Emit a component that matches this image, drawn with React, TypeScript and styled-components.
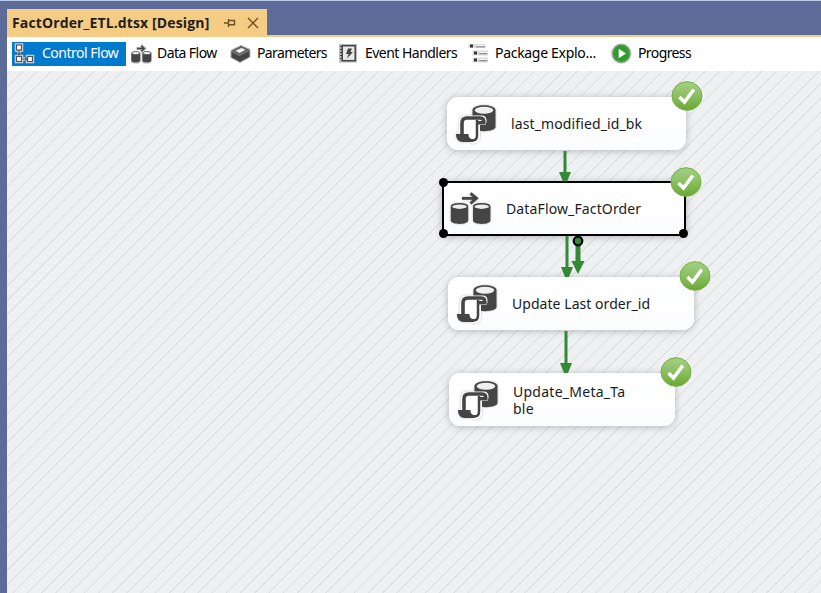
import React from "react";
import styled, { createGlobalStyle } from "styled-components";

const GlobalStyle = createGlobalStyle`
  html, body { margin: 0; padding: 0; overflow: hidden; }
`;

const Window = styled.div`
  box-sizing: border-box;
  width: 821px;
  height: 593px;
  padding: 0 0 0 7px;
  border-top: 1px solid #bccbe8;
  background: #5d6b99;
  display: flex;
  flex-direction: column;
  overflow: hidden;
  font-family: "Noto Sans", sans-serif;
`;

const TabStrip = styled.div`
  height: 34px;
  flex: none;
  padding-top: 8px;
  box-sizing: border-box;
  display: flex;
`;

const DocumentTab = styled.div`
  width: 260px;
  height: 27px;
  box-sizing: border-box;
  padding-left: 5px;
  background: #f5cc84;
  color: #1e1e1e;
  display: flex;
  align-items: center;
`;

const TabTitle = styled.span`
  width: 212px;
  font: 700 14px/26px "Open Sans", sans-serif;
  letter-spacing: 0.13px;
  white-space: nowrap;
`;

const TabGlyph = styled.svg<{ $gap: number }>`
  flex: none;
  width: 12px;
  height: 12px;
  margin-right: ${(p) => p.$gap}px;
  fill: none;
  stroke: #75501f;
  stroke-width: 1.4;
`;

const Toolbar = styled.div`
  height: 36px;
  flex: none;
  box-sizing: border-box;
  border-top: 2px solid #f5cc84;
  background: #fff;
  display: flex;
  align-items: center;
  padding: 0 0 1px 5px;
`;

const ToolItem = styled.div<{ $width: number; $lead: number; $active?: boolean }>`
  width: ${(p) => p.$width}px;
  height: 24px;
  flex: none;
  box-sizing: border-box;
  padding-left: ${(p) => p.$lead}px;
  display: flex;
  align-items: center;
  background: ${(p) => (p.$active ? "#007acc" : "transparent")};
  color: ${(p) => (p.$active ? "#fff" : "#000")};
`;

const ToolLabel = styled.span<{ $gap: number; $track: number }>`
  margin-left: ${(p) => p.$gap}px;
  padding-bottom: 2px;
  font-size: 14px;
  line-height: 22px;
  letter-spacing: ${(p) => p.$track}px;
  white-space: nowrap;
`;

const ToolIcon = styled.svg`
  width: 21px;
  height: 21px;
  flex: none;
`;

const Canvas = styled.div`
  position: relative;
  flex: 1;
  background: repeating-linear-gradient(
    135deg,
    #eff0f2 0,
    #eff0f2 0.7px,
    #dedfe1 1.2px,
    #dedfe1 1.8px,
    #eff0f2 2.3px,
    #eff0f2 10.05px
  );
`;

const Connectors = styled.svg`
  position: absolute;
  inset: 0;
  width: 100%;
  height: 100%;
`;

const Task = styled.div<{ $x: number; $y: number; $w: number; $selected?: boolean }>`
  position: absolute;
  left: ${(p) => p.$x}px;
  top: ${(p) => p.$y}px;
  width: ${(p) => p.$w}px;
  height: ${(p) => (p.$selected ? 55 : 53)}px;
  box-sizing: border-box;
  padding-left: ${(p) => (p.$selected ? 6 : 8)}px;
  display: flex;
  align-items: center;
  border: ${(p) => (p.$selected ? "2px solid #000" : "0")};
  border-radius: ${(p) => (p.$selected ? 2 : 11)}px;
  background: linear-gradient(#fff, #fbfcfe);
  box-shadow: 0 1px 7px rgba(60, 60, 70, 0.32);
`;

const TaskIcon = styled.svg`
  width: 42px;
  height: 40px;
  flex: none;
  filter: drop-shadow(0 0 1px rgba(60, 60, 60, 0.35));
`;

const TaskLabel = styled.span<{ $track: number }>`
  margin-left: 14px;
  color: #1b1b1b;
  font-size: 14px;
  line-height: 17px;
  letter-spacing: ${(p) => p.$track}px;
  white-space: pre;
`;

const StatusBadge = styled.svg<{ $inset: number }>`
  position: absolute;
  width: 32px;
  height: 32px;
  right: ${(p) => -17 - p.$inset}px;
  top: ${(p) => -17 - p.$inset / 2}px;
`;

const Handle = styled.i<{ $right?: boolean; $bottom?: boolean }>`
  position: absolute;
  width: 9px;
  height: 9px;
  border-radius: 50%;
  background: #000;
  ${(p) => (p.$right ? "right: -4px;" : "left: -5px;")}
  ${(p) => (p.$bottom ? "bottom: -4px;" : "top: -5px;")}
`;

const SqlTaskArt = () => (
  <TaskIcon viewBox="0 0 42 40">
    <path d="M17.500 6v17c0 5.500 23 5.500 23 0V6c0-6.500-23-6.500-23 0z" fill="#454545" />
    <ellipse cx="29" cy="6.300" rx="9.300" ry="3.500" fill="#efefef" />
    <path
      d="M10 11.500h17c5 0 5.500 6 3.500 9.500h-5.500v11c0 6-3 7.500-8 7.500L3 33l1-14c0-5 1.500-7.500 6-7.500z"
      fill="#fcfcfd"
    />
    <path d="M9 19c0-2 1-3 3-3h9v15c0 6-5 6-6 0H9z" fill="#fff" />
    <path
      d="M7 31V19c0-3.500 1.500-5 5-5h13c3 0 4 1.500 3.800 4.800h-6"
      fill="none"
      stroke="#454545"
      strokeWidth="3.600"
    />
    <path d="M22 16v15.500c0 3.500-1.500 5-4.500 5" fill="none" stroke="#454545" strokeWidth="2.500" />
    <path d="M1 30h12.500c0 3.500 1.200 5 4.500 5v3H8c-4.500 0-7-3-7-8z" fill="#454545" />
  </TaskIcon>
);

const FlowDrums = () => (
  <>
    <path d="M.8 18v13.500c0 4.500 17.400 4.500 17.400 0V18zM23 18v13.500c0 4.500 17.400 4.500 17.400 0V18z" fill="#454545" />
    <g fill="#ededed" stroke="#454545" strokeWidth="1.500">
      <ellipse cx="9.500" cy="17.700" rx="8" ry="3" />
      <ellipse cx="31.700" cy="17.700" rx="8" ry="3" />
    </g>
    <path d="M12 9.300h14M20.500 4.300l6 5-6 5" fill="none" stroke="#454545" strokeWidth="2.800" />
  </>
);

const DataFlowArt = () => (
  <TaskIcon viewBox="0 0 42 40">
    <FlowDrums />
  </TaskIcon>
);

const SuccessBadge = ({ inset }: { inset: number }) => (
  <StatusBadge viewBox="0 0 32 32" $inset={inset}>
    <defs>
      <linearGradient id="okFill" x1="0" y1="0" x2="0" y2="1">
        <stop offset="0" stopColor="#a5cf86" />
        <stop offset="0.5" stopColor="#8ac060" />
        <stop offset="1" stopColor="#67a92e" />
      </linearGradient>
    </defs>
    <ellipse cx="16" cy="16" rx="15" ry="14.300" fill="url(#okFill)" stroke="#74b043" strokeWidth="1" />
    <path d="M8.500 17l5 5L22.800 9.500" fill="none" stroke="#fff" strokeWidth="3.500" />
  </StatusBadge>
);

const ControlFlowIcon = () => (
  <ToolIcon viewBox="0 0 21 21">
    <path d="M5 7v6M9 16h5" stroke="#d3d3d3" strokeWidth="3.500" />
    <g fill="#f7f7f7" stroke="#d3d3d3" strokeWidth="3.500">
      <rect x="2.500" y="2" width="5" height="5" />
      <rect x="2.500" y="13.500" width="5" height="5" />
      <rect x="13.500" y="13.500" width="5" height="5" />
    </g>
    <g fill="#fff" stroke="#555" strokeWidth="1.200">
      <rect x="2.500" y="2" width="5" height="5" />
      <rect x="2.500" y="13.500" width="5" height="5" />
      <rect x="13.500" y="13.500" width="5" height="5" />
      <path d="M5 7v5M3.500 10.500L5 12l1.500-1.500M8 16h5M11.500 14.500L13 16l-1.500 1.500" fill="none" />
    </g>
  </ToolIcon>
);

const DataFlowIcon = () => (
  <ToolIcon viewBox="0 0 42 42">
    <g transform="translate(0 1) scale(1 1.080)">
      <path
        d="M1 18v14c0 5 17 5 17 0V18zM23 18v14c0 5 17 5 17 0V18z"
        fill="#454545"
        stroke="#b5b5b5"
        strokeWidth="3"
      />
      <path d="M11 9.300h16M20 3.300l7 6-7 6" fill="none" stroke="#bbb" strokeWidth="6" />
      <FlowDrums />
    </g>
  </ToolIcon>
);

const ParametersIcon = () => (
  <ToolIcon viewBox="0 0 21 21">
    <path d="M1 7.500L11 2.500l9 4v7.500L10 19.500.9 14.500z" fill="#444" stroke="#b5b5b5" strokeWidth="1" />
    <path d="M2 7.800L11 3.500l8 3.300-9.500 5.200z" fill="#666" />
    <path d="M5.500 7.700L11.500 5l4 1.800-6 3.200z" fill="#f3f3f3" />
    <path d="M2 8.500l7.500 4 9.500-5" fill="none" stroke="#999" strokeWidth=".8" />
  </ToolIcon>
);

const EventsIcon = () => (
  <ToolIcon viewBox="0 0 21 21">
    <rect x="1" y="1" width="18" height="18.500" fill="#bcbcbc" />
    <rect x="4.200" y="2.700" width="13" height="15" fill="#e9e9e9" stroke="#444" strokeWidth="1.500" />
    <path d="M2 3.500h3M2 6.500h3M2 9.500h3M2 12.500h3M2 15.500h3" stroke="#444" strokeWidth="1.200" />
    <path d="M10 5.500h4L12.500 9H15l-6 6.500 1.500-4.500H8z" fill="#444" />
  </ToolIcon>
);

const ExplorerIcon = () => (
  <ToolIcon viewBox="0 0 21 21">
    <path d="M.5 1h17v4H.5zM4.500 7.500H20v5H4.500zM4.500 14.500H20v5H4.500z" fill="#dcdcdc" />
    <path d="M2 1.500h3v3H2zM6 8.500h3v3H6zM6 15.500h3v3H6z" fill="#333" />
    <path d="M8 2h9v2H8zM11 9h8v2h-8zM11 16h8v2h-8z" fill="#f6f6f6" />
    <path d="M8 3.800h9M11 10.700h8M11 17.700h8" stroke="#777" strokeWidth="1" />
  </ToolIcon>
);

const ProgressIcon = () => (
  <ToolIcon viewBox="0 0 21 21">
    <circle cx="10.300" cy="10.500" r="9.200" fill="#319b2d" stroke="#9aae97" strokeWidth="1.600" />
    <path d="M7.700 5.700L15 10.500l-7.300 4.800z" fill="#fff" />
  </ToolIcon>
);

const tools = [
  { label: "Control Flow", icon: ControlFlowIcon, width: 114, lead: 2, gap: 7, track: -0.5, active: true },
  { label: "Data Flow", icon: DataFlowIcon, width: 101, lead: 5, gap: 5, track: -0.55 },
  { label: "Parameters", icon: ParametersIcon, width: 108, lead: 3, gap: 6, track: -0.62 },
  { label: "Event Handlers", icon: EventsIcon, width: 131, lead: 3, gap: 6, track: -0.53 },
  { label: "Package Explo...", icon: ExplorerIcon, width: 142, lead: 2, gap: 6, track: -0.3 },
  { label: "Progress", icon: ProgressIcon, width: 100, lead: 3, gap: 6, track: -0.6 },
];

const tasks = [
  { x: 440, y: 26, w: 239, track: 0.12, label: "last_modified_id_bk", art: SqlTaskArt },
  { x: 435, y: 110, w: 244, track: 0.13, label: "DataFlow_FactOrder", art: DataFlowArt, selected: true },
  { x: 441, y: 206, w: 246, track: 0.05, label: "Update Last order_id", art: SqlTaskArt },
  { x: 442, y: 302, w: 226, track: 0.26, label: "Update_Meta_Ta\nble", art: SqlTaskArt },
];

export default function App() {
  return (
    <>
      <GlobalStyle />
      <Window>
        <TabStrip>
          <DocumentTab>
            <TabTitle>FactOrder_ETL.dtsx [Design]</TabTitle>
            <TabGlyph $gap={11} viewBox="0 0 12 12">
              <path d="M0 6h4M4.500 2v8M5 3.500h5.500v5M5 7.800h6" />
            </TabGlyph>
            <TabGlyph $gap={0} viewBox="0 0 12 12">
              <path d="M1 1l10 10M11 1L1 11" />
            </TabGlyph>
          </DocumentTab>
        </TabStrip>
        <Toolbar>
          {tools.map(({ label, icon: Icon, width, lead, gap, track, active }) => (
            <ToolItem key={label} $width={width} $lead={lead} $active={active}>
              <Icon />
              <ToolLabel $gap={gap} $track={track}>{label}</ToolLabel>
            </ToolItem>
          ))}
        </Toolbar>
        <Canvas>
          {tasks.map(({ x, y, w, track, label, art: Art, selected }) => (
            <Task key={label} $x={x} $y={y} $w={w} $selected={selected}>
              <Art />
              <TaskLabel $track={track}>{label}</TaskLabel>
              {selected && (
                <>
                  <Handle />
                  <Handle $bottom />
                  <Handle $right $bottom />
                </>
              )}
              <SuccessBadge inset={selected ? 1 : 0} />
            </Task>
          ))}
          <Connectors viewBox="0 0 814 522">
            <g stroke="#338a35" strokeWidth="3">
              <path d="M558 80v24M560 165v33M559 260v33" />
              <path d="M571 172v22" strokeWidth="5" />
            </g>
            <path
              d="M552 101h12l-4 9.500h-4zM554 196h12l-4 10h-4zM553 292h12l-4 10h-4zM564.500 190h13L571 203z"
              fill="#338a35"
            />
            <circle cx="571" cy="170" r="4.300" fill="#338a35" stroke="#000" strokeWidth="2.200" />
          </Connectors>
        </Canvas>
      </Window>
    </>
  );
}
